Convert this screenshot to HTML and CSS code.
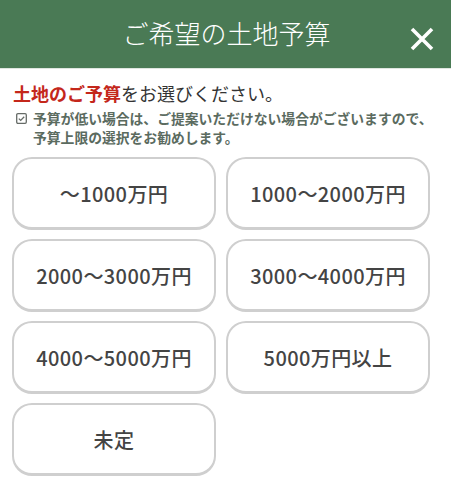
FILE: index.html
```html
<!DOCTYPE html>
<html lang="ja">
<head>
    <meta charset="UTF-8">
    <meta name="viewport" content="width=device-width, initial-scale=1.0">
    <title>ご希望の土地予算</title>
    <link rel="stylesheet" href="styles.css">
</head>
<body>
    <div class="modal">
        <div class="modal-head">
            <h1 class="modal-title">ご希望の土地予算</h1>
            <button class="close-btn" type="button" aria-label="閉じる">
                <svg width="24" height="24" viewBox="0 0 24 24">
                    <path d="M2 2 L22 22 M22 2 L2 22" stroke="#fff" stroke-width="3.6" stroke-linecap="butt" fill="none"/>
                </svg>
            </button>
        </div>

        <div class="intro">
            <p class="lead"><span class="lead-em">土地のご予算</span>をお選びください。</p>
            <div class="note">
                <svg class="note-icon" width="11" height="11" viewBox="0 0 11 11">
                    <rect x="0.7" y="0.7" width="9.6" height="9.6" rx="1.2" stroke="#666b67" stroke-width="1.3" fill="none"/>
                    <path d="M2.8 5.6 L4.7 7.4 L8.2 3.7" stroke="#666b67" stroke-width="1.3" fill="none"/>
                </svg>
                <p class="note-text">予算が低い場合は、ご提案いただけない場合がございますので、<br>予算上限の選択をお勧めします。</p>
            </div>
        </div>

        <div class="choices">
            <button class="choice" type="button">〜1000万円</button>
            <button class="choice" type="button">1000〜2000万円</button>
            <button class="choice" type="button">2000〜3000万円</button>
            <button class="choice" type="button">3000〜4000万円</button>
            <button class="choice" type="button">4000〜5000万円</button>
            <button class="choice" type="button">5000万円以上</button>
            <button class="choice" type="button">未定</button>
        </div>
    </div>
</body>
</html>
```

FILE: styles.css
```css
* {
    box-sizing: border-box;
}
body {
    margin: 0;
    background-color: #fff;
    font-family: "Noto Sans CJK JP", "Noto Sans", sans-serif;
    color: #333;
}
.modal-head {
    display: flex;
    align-items: center;
    justify-content: center;
    position: relative;
    height: 69px;
    background-color: #4a7a55;
    border-bottom: 1px solid #dfe6e0;
}
.modal-title {
    margin: 0 0 3px 2px;
    font-size: 26px;
    font-weight: 300;
    line-height: 1;
    color: #fff;
}
.close-btn {
    position: absolute;
    right: 17px;
    top: 27px;
    width: 24px;
    height: 24px;
    padding: 0;
    border: 0;
    background: none;
    cursor: pointer;
}
.close-btn svg {
    display: block;
}
.intro {
    padding: 12px 12px 0 13px;
}
.lead {
    margin: 0;
    font-size: 18px;
    line-height: 24px;
    color: #333;
}
.lead-em {
    color: #c4271b;
    font-weight: 700;
}
.note {
    display: flex;
    align-items: flex-start;
    gap: 6px;
    margin-top: 4px;
    padding-left: 3px;
}
.note-icon {
    flex: none;
    margin-top: 4px;
}
.note-text {
    margin: 0;
    font-size: 13.8px;
    line-height: 19px;
    font-weight: 700;
    color: #5b6b5f;
    white-space: nowrap;
}
.choices {
    display: grid;
    grid-template-columns: 1fr 1fr;
    column-gap: 10px;
    row-gap: 9px;
    padding: 10px 21px 0 12px;
}
.choice {
    height: 73px;
    border: 2px solid #cfcfcf;
    border-bottom-width: 3px;
    border-radius: 20px;
    background-color: #fff;
    font-family: "Noto Sans CJK JP", "Noto Sans", sans-serif;
    font-size: 20px;
    font-weight: 500;
    letter-spacing: 0.4px;
    color: #444;
    cursor: pointer;
}
.choice:hover {
    background-color: #f4f8f5;
}
```
